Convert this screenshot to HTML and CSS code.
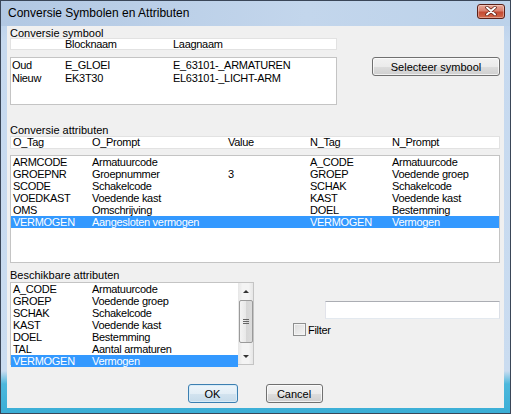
FILE: index.html
```html
<!DOCTYPE html>
<html lang="nl">
<head>
    <meta charset="UTF-8">
    <title>Conversie Symbolen en Attributen</title>
    <link rel="stylesheet" href="styles.css">
</head>
<body>
    <div class="window">
        <div class="titlebar">
            <span class="title">Conversie Symbolen en Attributen</span>
            <span class="close">
                <svg width="14" height="10" viewBox="0 0 14 10">
                    <path d="M3 1.5 L11 8.5 M11 1.5 L3 8.5" stroke="#5a1d14" stroke-width="3.4" stroke-linecap="round"/>
                    <path d="M3 1.5 L11 8.5 M11 1.5 L3 8.5" stroke="#fff" stroke-width="2" stroke-linecap="round"/>
                </svg>
            </span>
        </div>

        <div class="client">
            <!-- symbool -->
            <div class="symbool">
                <div class="sym-left">
                    <div class="label">Conversie symbool</div>
                    <div class="header sym-cols"><span></span><span>Blocknaam</span><span>Laagnaam</span></div>
                    <div class="list sym-list">
                        <div class="row sym-cols"><span>Oud</span><span>E_GLOEI</span><span>E_63101-_ARMATUREN</span></div>
                        <div class="row sym-cols"><span>Nieuw</span><span>EK3T30</span><span>EL63101-_LICHT-ARM</span></div>
                    </div>
                </div>
                <button class="btn select-btn">Selecteer symbool</button>
            </div>

            <!-- attributen -->
            <div class="label attr-label">Conversie attributen</div>
            <div class="header attr-cols">
                <span>O_Tag</span><span>O_Prompt</span><span>Value</span><span>N_Tag</span><span>N_Prompt</span>
            </div>
            <div class="list attr-list">
                <div class="row attr-cols"><span>ARMCODE</span><span>Armatuurcode</span><span></span><span>A_CODE</span><span>Armatuurcode</span></div>
                <div class="row attr-cols"><span>GROEPNR</span><span>Groepnummer</span><span>3</span><span>GROEP</span><span>Voedende groep</span></div>
                <div class="row attr-cols"><span>SCODE</span><span>Schakelcode</span><span></span><span>SCHAK</span><span>Schakelcode</span></div>
                <div class="row attr-cols"><span>VOEDKAST</span><span>Voedende kast</span><span></span><span>KAST</span><span>Voedende kast</span></div>
                <div class="row attr-cols"><span>OMS</span><span>Omschrijving</span><span></span><span>DOEL</span><span>Bestemming</span></div>
                <div class="row attr-cols selected"><span>VERMOGEN</span><span>Aangesloten vermogen</span><span></span><span>VERMOGEN</span><span>Vermogen</span></div>
            </div>

            <!-- beschikbare -->
            <div class="beschikbaar">
                <div class="besch-left">
                    <div class="label">Beschikbare attributen</div>
                    <div class="list besch-list">
                        <div class="besch-rows">
                            <div class="row attr-cols"><span>A_CODE</span><span>Armatuurcode</span></div>
                            <div class="row attr-cols"><span>GROEP</span><span>Voedende groep</span></div>
                            <div class="row attr-cols"><span>SCHAK</span><span>Schakelcode</span></div>
                            <div class="row attr-cols"><span>KAST</span><span>Voedende kast</span></div>
                            <div class="row attr-cols"><span>DOEL</span><span>Bestemming</span></div>
                            <div class="row attr-cols"><span>TAL</span><span>Aantal armaturen</span></div>
                            <div class="row attr-cols selected"><span>VERMOGEN</span><span>Vermogen</span></div>
                        </div>
                        <div class="scrollbar">
                            <div class="arrow up"></div>
                            <div class="thumb"><span class="grip"></span></div>
                            <div class="arrow down"></div>
                        </div>
                    </div>
                </div>
                <div class="filter-box">
                    <input class="filter-input" type="text">
                    <label class="filter"><span class="check"></span>Filter</label>
                </div>
            </div>

            <div class="actions">
                <button class="btn ok-btn">OK</button>
                <button class="btn cancel-btn">Cancel</button>
            </div>
        </div>
    </div>
</body>
</html>
```

FILE: styles.css
```css
* {
    margin: 0;
    padding: 0;
    box-sizing: border-box;
}

body {
    width: 511px;
    height: 414px;
    overflow: hidden;
    background: #fff;
    font-family: 'Liberation Sans', Arial, sans-serif;
    font-size: 11px;
    color: #000;
}

.window {
    width: 511px;
    height: 414px;
    border: 1px solid #3a4658;
    padding: 0 6px 5px 6px;
    background: linear-gradient(to bottom, #b4cce8 0, #c6d9ef 40px, #cadcf0 370px, #4db8dc 383px, #3aaed6 100%);
    display: flex;
    flex-direction: column;
}

.titlebar {
    height: 25px;
    display: flex;
    align-items: center;
    justify-content: space-between;
    background: linear-gradient(to right, #b2c8e3, #c3d6ec 60%, #bcd2ea);
    margin: 0 -6px;
    padding: 0 5px 0 7px;
}

.title {
    font-size: 12px;
    color: #000;
    margin-top: -1px;
}

.close {
    width: 28px;
    height: 15px;
    margin-top: -5px;
    border: 1px solid #5b2018;
    border-radius: 3px;
    background: linear-gradient(to bottom, #e9a99a 0, #d9806e 45%, #c44a33 55%, #d26a4c 100%);
    display: flex;
    align-items: center;
    justify-content: center;
    box-shadow: inset 0 0 0 1px rgba(255, 255, 255, 0.35);
}

.client {
    flex: 1;
    background: #f0f0f0;
    padding: 2px 4px 0 3px;
    display: flex;
    flex-direction: column;
}

.label {
    height: 10px;
    line-height: 10px;
    white-space: nowrap;
}

.header {
    height: 12px;
    line-height: 10px;
    background: #fff;
    border: 1px solid #e2e2e2;
    white-space: nowrap;
    letter-spacing: -0.3px;
}

.list {
    background: #fff;
    border: 1px solid #c4c4c4;
    white-space: nowrap;
    letter-spacing: -0.3px;
}

.row {
    height: 12px;
    line-height: 12px;
}

.selected {
    background: #3399ff;
    color: #fff;
}

/* symbool */
.symbool {
    display: flex;
}

.sym-left {
    width: 327px;
}

.sym-cols {
    display: grid;
    grid-template-columns: 53px 108px 1fr;
    padding-left: 1px;
}

.sym-list {
    height: 48px;
    margin-top: 7px;
    padding-top: 1px;
}

.sym-list .row {
    height: 13px;
    line-height: 13px;
}

.select-btn {
    width: 128px;
    height: 19px;
    margin: 29px 0 0 35px;
}

/* attributen */
.attr-label {
    margin-top: 20px;
}

.attr-cols {
    display: grid;
    grid-template-columns: 79px 136px 82px 82px 1fr;
    padding-left: 2px;
}

.header.attr-cols {
    margin-top: 1px;
    height: 13px;
    line-height: 11px;
}

.attr-list {
    height: 108px;
    margin-top: 6px;
}

/* beschikbare */
.beschikbaar {
    display: flex;
    margin-top: 7px;
}

.besch-left {
    width: 245px;
}

.besch-list {
    height: 83px;
    margin-top: 2px;
    display: flex;
}

.besch-rows {
    flex: 1;
}

.besch-rows .attr-cols {
    grid-template-columns: 79px 1fr;
}

.scrollbar {
    width: 15px;
    background: linear-gradient(to right, #e6e6e6, #f4f4f4 30%, #f4f4f4 70%, #e6e6e6);
    display: flex;
    flex-direction: column;
    align-items: center;
}

.arrow {
    width: 0;
    height: 0;
    border-left: 3px solid transparent;
    border-right: 3px solid transparent;
}

.arrow.up {
    border-bottom: 3px solid #333;
    margin: 7px 0 7px;
}

.arrow.down {
    border-top: 3px solid #333;
    margin: auto 0 6px;
}

.thumb {
    width: 14px;
    height: 43px;
    border: 1px solid #9a9a9a;
    border-radius: 2px;
    background: linear-gradient(to right, #f3f3f3, #e8e8e8 50%, #d6d6d6 51%, #dcdcdc);
    display: flex;
    align-items: center;
    justify-content: center;
}

.grip {
    width: 6px;
    height: 5px;
    border-top: 1px solid #666;
    border-bottom: 1px solid #666;
    position: relative;
}

.grip::after {
    content: "";
    position: absolute;
    left: 0;
    right: 0;
    top: 1px;
    border-top: 1px solid #666;
}

.filter-box {
    flex: 1;
    display: flex;
    flex-direction: column;
    padding-top: 31px;
}

.filter-input {
    width: 175px;
    height: 18px;
    margin-left: 71px;
    border: 1px solid #abadb3;
    border-color: #abadb3 #dbdfe6 #e3e9ef #e2e3ea;
    background: #fff;
    outline: none;
}

.filter {
    display: flex;
    align-items: center;
    margin: 4px 0 0 39px;
    height: 13px;
    letter-spacing: -0.3px;
}

.check {
    width: 13px;
    height: 13px;
    border: 1px solid #8e8f8f;
    background: linear-gradient(135deg, #dcdcdc, #f4f4f4);
    box-shadow: inset 0 0 0 1px #f4f4f4;
    margin-right: 2px;
}

/* buttons */
.btn {
    font-family: 'Liberation Sans', Arial, sans-serif;
    font-size: 11px;
    color: #000;
    border: 1px solid #707070;
    border-radius: 3px;
    background: linear-gradient(to bottom, #f2f2f2 0, #ebebeb 50%, #dddddd 51%, #cfcfcf 100%);
    box-shadow: inset 0 0 0 1px rgba(255, 255, 255, 0.7);
}

.actions {
    display: flex;
    justify-content: center;
    gap: 28px;
    margin-top: auto;
    margin-bottom: 5px;
}

.ok-btn {
    width: 50px;
    height: 19px;
    border-color: #3c7fb1;
    background: linear-gradient(to bottom, #eef5fa 0, #e3eef6 50%, #d3e3ef 51%, #c6dbea 100%);
    box-shadow: inset 0 0 0 1px #d8ecf8;
}

.cancel-btn {
    width: 57px;
    height: 19px;
}
```
